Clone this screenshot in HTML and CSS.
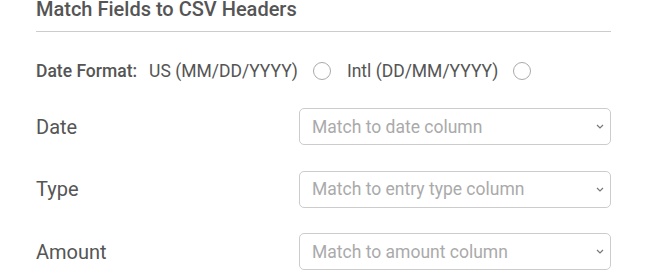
FILE: index.html
```html
<!DOCTYPE html>
<html>
<head>
<meta charset="utf-8">
<link rel="stylesheet" href="styles.css">
</head>
<body>
<div class="panel">
  <h2 class="title">Match Fields to CSV Headers</h2>
  <div class="format-row">
    <span class="format-label">Date Format:</span>
    <label class="opt">US (MM/DD/YYYY) <span class="radio"></span></label>
    <label class="opt">Intl (DD/MM/YYYY) <span class="radio"></span></label>
  </div>
  <div class="field">
    <span class="field-label">Date</span>
    <div class="select-wrap">
      <select class="select"><option>Match to date column</option></select>
      <svg class="chev" width="8" height="5" viewBox="0 0 8 5"><path d="M1 1l3 3 3-3" fill="none" stroke="#777" stroke-width="1.2"/></svg>
    </div>
  </div>
  <div class="field">
    <span class="field-label">Type</span>
    <div class="select-wrap">
      <select class="select"><option>Match to entry type column</option></select>
      <svg class="chev" width="8" height="5" viewBox="0 0 8 5"><path d="M1 1l3 3 3-3" fill="none" stroke="#777" stroke-width="1.2"/></svg>
    </div>
  </div>
  <div class="field">
    <span class="field-label">Amount</span>
    <div class="select-wrap">
      <select class="select"><option>Match to amount column</option></select>
      <svg class="chev" width="8" height="5" viewBox="0 0 8 5"><path d="M1 1l3 3 3-3" fill="none" stroke="#777" stroke-width="1.2"/></svg>
    </div>
  </div>
</div>
</body>
</html>
```

FILE: styles.css
```css
html, body {
  margin: 0;
  padding: 0;
  background: #fff;
}
body {
  font-family: Roboto, "Liberation Sans", sans-serif;
  color: #555;
}
.panel {
  width: 575px;
  margin-left: 36px;
}
.title {
  margin: 0;
  font-size: 20px;
  font-weight: 500;
  line-height: 18px;
  color: #555;
  padding-bottom: 13px;
  border-bottom: 1px solid #ccc;
}
.format-row {
  display: flex;
  align-items: center;
  margin-top: 29px;
  height: 20px;
  font-size: 17.5px;
}
.format-label {
  font-weight: 500;
  margin-right: 12px;
}
.opt {
  display: flex;
  align-items: center;
  gap: 15px;
  margin-right: 16px;
}
.radio {
  width: 16px;
  height: 16px;
  border: 1.5px solid #aaa;
  border-radius: 50%;
  display: inline-block;
}
.field {
  display: grid;
  grid-template-columns: 263px 1fr;
  align-items: center;
  height: 37px;
  margin-top: 25.5px;
}
.format-row + .field {
  margin-top: 27px;
}
.field-label {
  font-size: 20px;
}
.select-wrap {
  position: relative;
  height: 37px;
}
.select {
  -webkit-appearance: none;
  appearance: none;
  width: 100%;
  height: 37px;
  box-sizing: border-box;
  border: 1px solid #ccc;
  border-radius: 5px;
  background: #fff;
  padding: 0 12px;
  font-family: Roboto, "Liberation Sans", sans-serif;
  font-size: 17.5px;
  color: #aaa;
  outline: none;
}
.chev {
  position: absolute;
  right: 7px;
  top: 16px;
  pointer-events: none;
}
```
